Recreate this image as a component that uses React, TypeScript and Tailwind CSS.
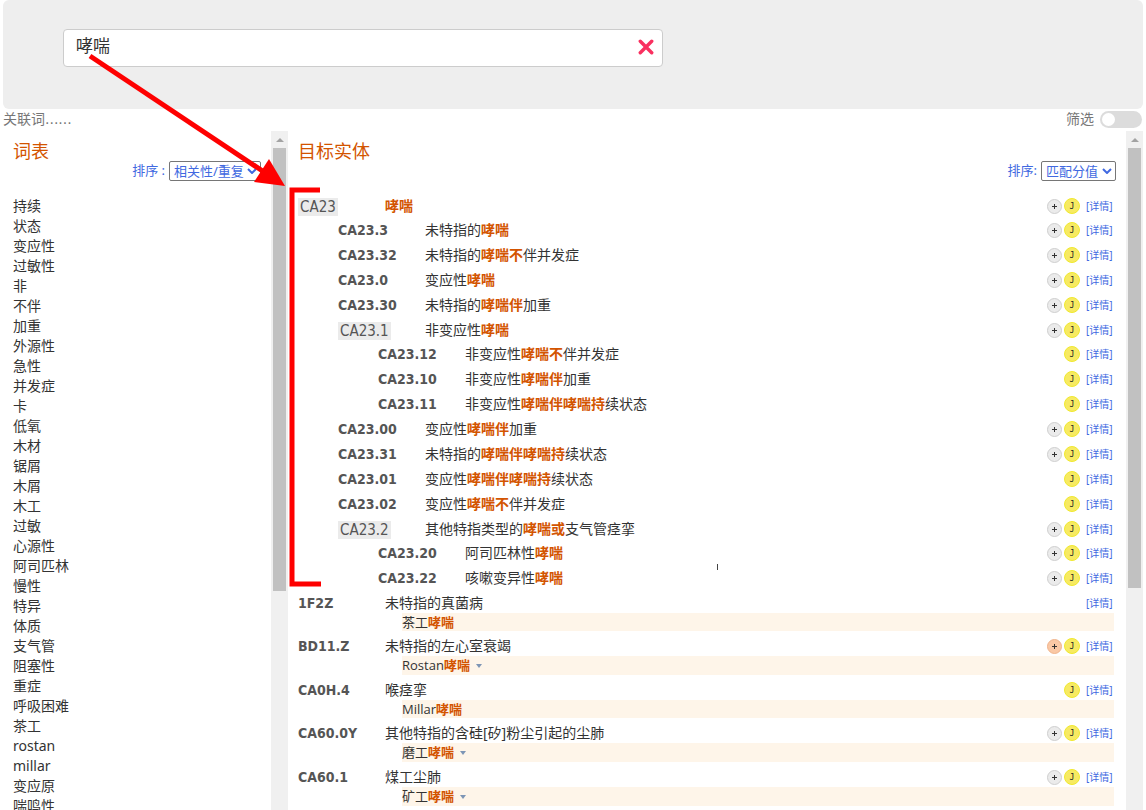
import { useState } from 'react';

type Part = string | { hit: string };

interface Entry {
  code: string;
  level: number;
  title: Part[];
  group?: boolean;
  plus?: 'plain' | 'accent';
  related?: boolean;
}

interface Match extends Entry {
  term: Part[];
  more?: boolean;
}

const words = [
  '持续', '状态', '变应性', '过敏性', '非', '不伴', '加重', '外源性', '急性', '并发症',
  '卡', '低氧', '木材', '锯屑', '木屑', '木工', '过敏', '心源性', '阿司匹林', '慢性',
  '特异', '体质', '支气管', '阻塞性', '重症', '呼吸困难', '茶工', 'rostan', 'millar',
  '变应原', '喘鸣性',
];

const h = (hit: string) => ({ hit });

const entries: Entry[] = [
  { code: 'CA23', level: 0, group: true, title: [h('哮喘')], plus: 'plain', related: true },
  { code: 'CA23.3', level: 1, title: ['未特指的', h('哮喘')], plus: 'plain', related: true },
  { code: 'CA23.32', level: 1, title: ['未特指的', h('哮喘不'), '伴并发症'], plus: 'plain', related: true },
  { code: 'CA23.0', level: 1, title: ['变应性', h('哮喘')], plus: 'plain', related: true },
  { code: 'CA23.30', level: 1, title: ['未特指的', h('哮喘伴'), '加重'], plus: 'plain', related: true },
  { code: 'CA23.1', level: 1, group: true, title: ['非变应性', h('哮喘')], plus: 'plain', related: true },
  { code: 'CA23.12', level: 2, title: ['非变应性', h('哮喘不'), '伴并发症'], related: true },
  { code: 'CA23.10', level: 2, title: ['非变应性', h('哮喘伴'), '加重'], related: true },
  { code: 'CA23.11', level: 2, title: ['非变应性', h('哮喘伴哮喘持'), '续状态'], related: true },
  { code: 'CA23.00', level: 1, title: ['变应性', h('哮喘伴'), '加重'], plus: 'plain', related: true },
  { code: 'CA23.31', level: 1, title: ['未特指的', h('哮喘伴哮喘持'), '续状态'], plus: 'plain', related: true },
  { code: 'CA23.01', level: 1, title: ['变应性', h('哮喘伴哮喘持'), '续状态'], related: true },
  { code: 'CA23.02', level: 1, title: ['变应性', h('哮喘不'), '伴并发症'], related: true },
  { code: 'CA23.2', level: 1, group: true, title: ['其他特指类型的', h('哮喘或'), '支气管痉挛'], plus: 'plain', related: true },
  { code: 'CA23.20', level: 2, title: ['阿司匹林性', h('哮喘')], plus: 'plain', related: true },
  { code: 'CA23.22', level: 2, title: ['咳嗽变异性', h('哮喘')], plus: 'plain', related: true },
];

const matches: Match[] = [
  { code: '1F2Z', level: 0, title: ['未特指的真菌病'], term: ['茶工', h('哮喘')] },
  { code: 'BD11.Z', level: 0, title: ['未特指的左心室衰竭'], term: ['Rostan', h('哮喘')], more: true, plus: 'accent', related: true },
  { code: 'CA0H.4', level: 0, title: ['喉痉挛'], term: ['Millar', h('哮喘')], related: true },
  { code: 'CA60.0Y', level: 0, title: ['其他特指的含硅[矽]粉尘引起的尘肺'], term: ['磨工', h('哮喘')], more: true, plus: 'plain', related: true },
  { code: 'CA60.1', level: 0, title: ['煤工尘肺'], term: ['矿工', h('哮喘')], more: true, plus: 'plain', related: true },
];

const indents = ['', 'pl-10', 'pl-20'];

function Parts({ parts }: { parts: Part[] }) {
  return (
    <>
      {parts.map((p, i) =>
        typeof p === 'string' ? (
          <span key={i}>{p}</span>
        ) : (
          <b key={i} className="font-bold text-[#d35400]">{p.hit}</b>
        ),
      )}
    </>
  );
}

function Row({ entry, height }: { entry: Entry; height: string }) {
  return (
    <div className={`flex items-center ${height} ${indents[entry.level]}`}>
      <div className="w-[87px] shrink-0 font-['DejaVu_Sans_Condensed','DejaVu_Sans',sans-serif] leading-[18px] text-[#555]">
        {entry.group ? (
          <span className="mt-0.5 block w-fit bg-[#ebebeb] px-0.5 text-[15px]">{entry.code}</span>
        ) : (
          <b className="block text-sm leading-[18px] font-bold">{entry.code}</b>
        )}
      </div>
      <div className="min-w-0 flex-1 truncate text-sm text-[#333]">
        <Parts parts={entry.title} />
      </div>
      <div className="flex shrink-0 items-center gap-0.5">
        {entry.plus && (
          <button
            type="button"
            aria-label="后组配"
            className={`flex size-[15px] items-center justify-center rounded-full border ${
              entry.plus === 'accent' ? 'border-[#f0b48c] bg-[#fac8a5]' : 'border-[#cfcfcf] bg-[#ebebeb]'
            }`}
          >
            <svg viewBox="0 0 5 5" className="size-[5px]" fill="#333" aria-hidden="true">
              <path d="M2 0h1v2h2v1H3v2H2V3H0V2h2z" />
            </svg>
          </button>
        )}
        {entry.related && (
          <button
            type="button"
            className="flex size-4 items-center justify-center rounded-full border border-[#f0e92e] bg-[#f7ea62] pt-0.5 font-['DejaVu_Sans_Mono',monospace] text-[8px] leading-none text-[#222]"
          >
            J
          </button>
        )}
        <a href="#" className="ml-1 w-7 text-[10px] leading-4 text-[#4169e1]">[详情]</a>
      </div>
    </div>
  );
}

function SortSelect({ id, label, options }: { id: string; label: string; options: string[] }) {
  return (
    <div className="flex h-5 items-center justify-end gap-1 text-[13px] text-[#4169e1]">
      <label htmlFor={id}>{label}</label>
      <div className="relative flex">
        <select
          id={id}
          className="h-5 appearance-none rounded-xs border border-[#767676] bg-white pr-4 pl-1 leading-4"
        >
          {options.map((o) => (
            <option key={o}>{o}</option>
          ))}
        </select>
        <svg
          viewBox="0 0 10 6"
          className="pointer-events-none absolute top-[7px] right-1 h-1.5 w-2.5"
          fill="none"
          stroke="#4169e1"
          strokeWidth="2"
          aria-hidden="true"
        >
          <path d="M1 1l4 4 4-4" />
        </svg>
      </div>
    </div>
  );
}

function ScrollTrack({ thumb }: { thumb: string }) {
  return (
    <div className="flex w-[17px] shrink-0 flex-col items-center bg-[#f0f0f0]" aria-hidden="true">
      <div className="flex h-[17px] shrink-0 items-center">
        <svg viewBox="0 0 8 4" className="h-1 w-2" fill="#a3a3a3">
          <path d="M4 0l4 4H0z" />
        </svg>
      </div>
      <div className={`w-[13px] bg-[#c1c1c1] ${thumb}`} />
    </div>
  );
}

function Annotations() {
  return (
    <svg
      width="800"
      height="600"
      viewBox="0 0 800 600"
      className="pointer-events-none absolute top-0 left-0"
      aria-hidden="true"
    >
      <g fill="none" stroke="#fe0000" strokeWidth="5">
        <path d="M90 56L264 172" />
        <path d="M320 190H292v394h29" />
      </g>
      <path d="M285 186l-31-4 15-23z" fill="#fe0000" />
      <path d="M717.500 564v6" stroke="#444" />
    </svg>
  );
}

export default function App() {
  const [query, setQuery] = useState('哮喘');

  return (
    <div className="relative flex h-screen flex-col overflow-hidden bg-white px-[3px] font-['Noto_Sans','Noto_Sans_CJK_SC',sans-serif] text-[#333]">
      <header className="h-[109px] shrink-0 rounded-md bg-[#eeeeee] px-[60px] pt-[29px]">
        <div className="flex h-[38px] max-w-[600px] items-center rounded-sm border border-[#ccc] bg-white pr-2 pb-0.5 pl-3">
          <input
            aria-label="检索"
            value={query}
            onChange={(e) => setQuery(e.target.value)}
            className="min-w-0 flex-1 pb-0.5 text-[17px] leading-6 outline-none"
          />
          <button type="button" aria-label="清除" onClick={() => setQuery('')}>
            <svg viewBox="0 0 14 14" className="block size-4" fill="none" stroke="#f9305f" strokeWidth="3" strokeLinecap="round">
              <path d="M2 2l10 10M12 2L2 12" />
            </svg>
          </button>
        </div>
      </header>

      <div className="mb-0.5 flex h-5 shrink-0 items-center justify-between pr-px text-sm text-[#777]">
        <span className="font-['DejaVu_Sans','Noto_Sans_CJK_SC',sans-serif]">关联词......</span>
        <label className="flex items-center gap-1.5">
          筛选
          <input
            type="checkbox"
            role="switch"
            className="flex h-[17px] w-[42px] appearance-none items-center rounded-full bg-[#dcdcdc] px-0.5 before:size-[13px] before:rounded-full before:bg-white checked:justify-end checked:bg-[#4169e1]"
          />
        </label>
      </div>

      <main className="flex min-h-0 flex-1">
        <section className="flex w-[285px] shrink-0">
          <div className="min-w-0 flex-1 overflow-hidden pt-2.5 pr-2.5 pl-2.5">
            <h2 className="text-lg leading-5 text-[#d35400]">词表</h2>
            <SortSelect id="word-sort" label="排序 :" options={['相关性/重复', '字母顺序']} />
            <ul className="mt-[15px] text-sm">
              {words.map((w) => (
                <li key={w} className="h-5 leading-5">{w}</li>
              ))}
            </ul>
          </div>
          <ScrollTrack thumb="h-[443px]" />
        </section>

        <section className="flex min-w-0 flex-1">
          <div className="min-w-0 flex-1 overflow-hidden pt-2.5 pr-2.5 pl-2.5">
            <h2 className="text-lg leading-5 text-[#d35400]">目标实体</h2>
            <SortSelect id="entity-sort" label="排序:" options={['匹配分值', '编码顺序']} />
            <ul className="mt-[13px] pr-0.5">
              {entries.map((e) => (
                <li key={e.code}>
                  <Row entry={e} height={e.group ? 'h-6' : 'h-[25px] pb-px'} />
                </li>
              ))}
              {matches.map((m) => (
                <li key={m.code} className="pb-[3px]">
                  <Row entry={m} height="h-[22px] pt-0.5" />
                  <div className={`ml-[104px] flex items-start gap-1.5 bg-[#fef5e9] text-[13px] leading-[18px] ${m.more ? 'h-[19px]' : 'h-[18px]'}`}>
                    <span className="font-['Open_Sans','Noto_Sans_CJK_SC',sans-serif]"><Parts parts={m.term} /></span>
                    {m.more && (
                      <button type="button" aria-label="更多" className="flex h-5 items-center">
                        <svg viewBox="0 0 6 4" className="h-1 w-1.5" fill="#7d95b5">
                          <path d="M0 0h6L3 4z" />
                        </svg>
                      </button>
                    )}
                  </div>
                </li>
              ))}
            </ul>
          </div>
          <ScrollTrack thumb="h-[440px]" />
        </section>
      </main>

      <Annotations />
    </div>
  );
}
